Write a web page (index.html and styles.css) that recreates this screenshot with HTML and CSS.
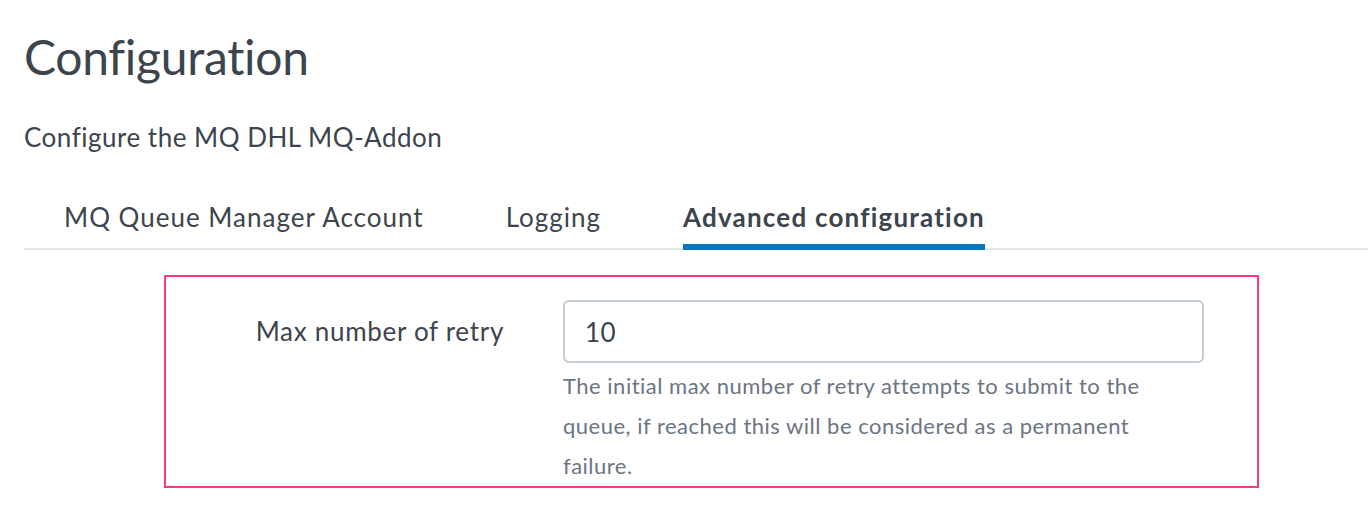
FILE: index.html
```html
<!DOCTYPE html>
<html lang="en">
<head>
<meta charset="utf-8">
<title>Configuration</title>
<link rel="stylesheet" href="styles.css">
</head>
<body>
<div class="page">
  <h1 class="title">Configuration</h1>
  <p class="subtitle">Configure the MQ DHL MQ-Addon</p>
  <nav class="tabs">
    <span class="tab">MQ Queue Manager Account</span>
    <span class="tab">Logging</span>
    <span class="tab tab-active">Advanced configuration</span>
  </nav>
  <div class="form-box">
    <label class="field-label" for="retry">Max number of retry</label>
    <div class="field-control">
      <input id="retry" class="text-input" type="text" value="10">
      <p class="help">The initial max number of retry attempts to submit to the queue, if reached this will be considered as a permanent failure.</p>
    </div>
  </div>
</div>
</body>
</html>
```

FILE: styles.css
```css
html, body {
  margin: 0;
  padding: 0;
  background: #ffffff;
}
body {
  font-family: "Lato", "Open Sans", sans-serif;
  color: #3c444d;
}
.page {
  padding-left: 24px;
}
.title {
  margin: 0;
  padding-top: 27px;
  font-size: 48px;
  letter-spacing: -0.3px;
  line-height: 60px;
  font-weight: 400;
  color: #3c444d;
}
.subtitle {
  margin: 35px 0 0;
  font-size: 26px;
  letter-spacing: 0.5px;
  line-height: 30px;
}
.tabs {
  margin-top: 50px;
  display: flex;
  gap: 82px;
  padding-left: 40px;
  border-bottom: 2px solid #e1e6eb;
}
.tab {
  font-size: 26px;
  letter-spacing: 1px;
  line-height: 30px;
  padding-bottom: 12px;
  border-bottom: 6px solid transparent;
  margin-bottom: -2px;
  color: #3c444d;
}
.tab-active {
  font-weight: 700;
  letter-spacing: 1.2px;
  border-bottom-color: #0877be;
}
.form-box {
  margin: 25px 0 0 140px;
  width: 1095px;
  box-sizing: border-box;
  border: 2px solid #ff3a7c;
  padding: 23px 0 0;
  display: grid;
  grid-template-columns: 338px 641px;
  column-gap: 59px;
  align-items: start;
}
.field-label {
  text-align: right;
  font-size: 26px;
  letter-spacing: 0.7px;
  line-height: 63px;
  color: #3c444d;
}
.field-control {
  display: flex;
  flex-direction: column;
}
.text-input {
  box-sizing: border-box;
  width: 641px;
  height: 63px;
  border: 2px solid #c3cbd4;
  border-radius: 6px;
  padding: 0 20px;
  font-family: "Lato", "Open Sans", sans-serif;
  font-size: 26px;
  letter-spacing: 0.5px;
  color: #3c444d;
  background: #ffffff;
  outline: none;
}
.help {
  margin: 3px 0 0;
  font-size: 22px;
  letter-spacing: 0.5px;
  line-height: 40px;
  color: #6b7583;
}
```
